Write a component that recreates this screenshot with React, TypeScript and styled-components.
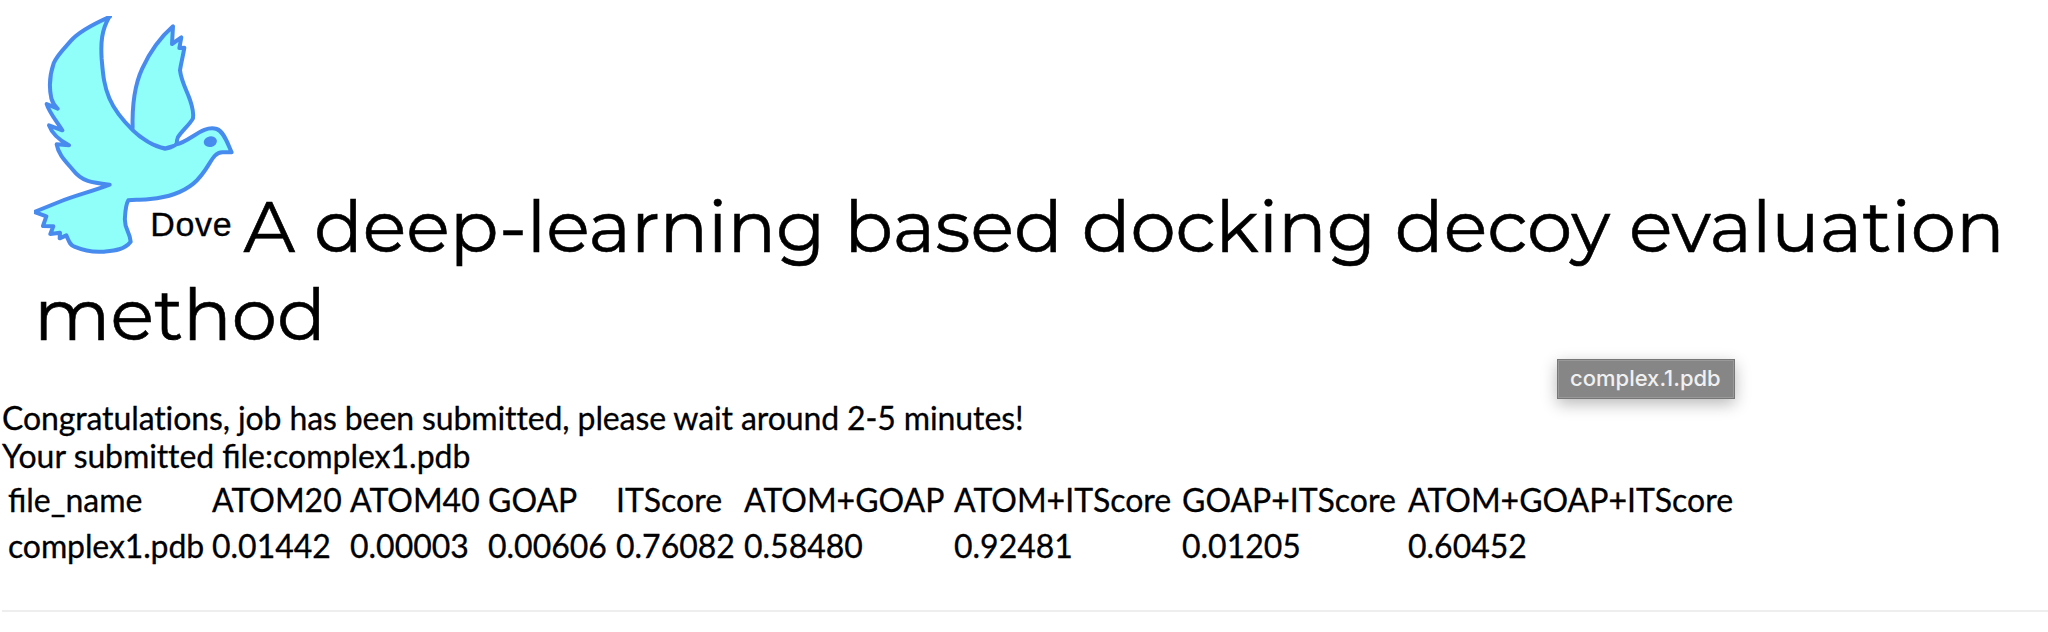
import React from "react";
import styled, { createGlobalStyle } from "styled-components";

const GlobalStyle = createGlobalStyle`
  body {
    margin: 0;
    background: #fff;
    color: #000;
    font: 32px/38.4px Lato, sans-serif;
    -webkit-text-stroke: 0.3px currentColor;
    overflow: hidden;
  }
`;

const Page = styled.main`
  position: relative;
  height: 632px;
  overflow: hidden;
`;

const Title = styled.h1`
  margin: 0;
  padding: 16px 34px 0;
  font: 400 72px/88px Montserrat, Inter, sans-serif;
  -webkit-text-stroke: 0.6px currentColor;
`;

const Logo = styled.svg`
  display: inline-block;
  width: 200px;
  height: 240px;
  margin: 0 9.5px -4px 0;
  overflow: hidden;
  vertical-align: baseline;
`;

const Status = styled.section`
  padding: 41px 0 0 2px;
`;

const Message = styled.p`
  margin: 0;
`;

const Unligated = styled.span<{ $spacing?: number }>`
  font-variant-ligatures: none;
  letter-spacing: ${(p) => p.$spacing ?? 0}px;
`;

const Scores = styled.table`
  width: 1736px;
  margin-top: -1px;
  table-layout: fixed;
  border-collapse: separate;
  border-spacing: 4px;
`;

const Column = styled.col<{ $width: number }>`
  width: ${(p) => p.$width}px;
`;

const Cell = styled.td<{ $spacing?: number }>`
  height: 38px;
  padding: 2px;
  line-height: 38px;
  letter-spacing: ${(p) => p.$spacing ?? 0}px;
  white-space: nowrap;
`;

const Divider = styled.hr`
  height: 2px;
  margin: 39px 0 0 2px;
  border: 0;
  background: #eee;
`;

const DragLabel = styled.div`
  position: absolute;
  left: 1557px;
  top: 359px;
  box-sizing: border-box;
  width: 178px;
  height: 40px;
  padding-left: 12px;
  border: 1px solid #777;
  background: #868686;
  box-shadow: inset 0 0 0 1px #999, 0 5px 16px rgba(0, 0, 0, 0.28);
  color: #f0f0f0;
  font: 500 22px/37px Inter, sans-serif;
  -webkit-text-stroke: 0;
`;

const columns = [
  { name: "file_name", score: "complex1.pdb", width: 200, spacing: -0.12 },
  { name: "ATOM20", score: "0.01442", width: 134 },
  { name: "ATOM40", score: "0.00003", width: 134 },
  { name: "GOAP", score: "0.00606", width: 124 },
  { name: "ITScore", score: "0.76082", width: 124 },
  { name: "ATOM+GOAP", score: "0.58480", width: 206 },
  { name: "ATOM+ITScore", score: "0.92481", width: 224 },
  { name: "GOAP+ITScore", score: "0.01205", width: 222 },
  { name: "ATOM+GOAP+ITScore", score: "0.60452", width: 328 },
];

function DoveLogo() {
  return (
    <Logo viewBox="42 48 600 720">
      <g fill="#90fffa" stroke="#488bef" strokeWidth="12" strokeLinejoin="round">
        <path d="M338 392C336 330 341 260 367 205C389 158 421 112 459 79L456 132L484 112L478 144L493 143C489 169 483 190 480 211C484 245 500 271 509 297C516 318 522 333 519 355C507 377 481 396 472 415L469 436L435 440Z" />
        <path d="M270 50C234 66 180 91 153 122C130 148 110 167 101 190C87 230 88 267 94 295C98 309 104 318 113 326L80 312C87 336 109 363 127 391L87 376C97 403 121 422 147 436L110 433C115 463 136 483 159 510C186 545 214 548 269 554C218 574 163 587 117 606L43 636L79 649L69 678L100 679L91 702L120 698L119 715L139 706C147 724 149 735 163 740C199 755 222 757 249 755C279 752 312 751 332 725C330 694 311 686 315 651C316 632 318 613 325 601C346 597 366 602 391 597C447 592 487 578 520 551C570 510 573 456 608 457L635 457C624 434 613 395 590 387C548 374 510 425 469 433C455 442 444 446 435 446C400 440 360 412 338 390C309 362 282 328 268 295C251 254 249 222 245 177C242 130 244 91 268 50Z" />
        <path
          stroke="none"
          d="M344 388L348 360L470 400L462 431L436 439C405 434 372 414 344 388Z"
        />
      </g>
      <ellipse cx="571" cy="425" rx="20" ry="16" fill="#488bef" transform="rotate(-12 571 425)" />
      <text
        x="391"
        y="709"
        fontFamily="Liberation Sans, sans-serif"
        fontSize="102"
        letterSpacing="2"
        fill="#000"
        stroke="#000"
        strokeWidth="1"
      >
        Dove
      </text>
    </Logo>
  );
}

export default function App() {
  return (
    <Page>
      <GlobalStyle />
      <Title>
        <DoveLogo />
        A deep-learning based docking decoy evaluation method
      </Title>
      <Status>
        <Message>
          <Unligated $spacing={-0.11}>
            Congratulations, job has been submitted, please wait around 2-5 minutes!
          </Unligated>
        </Message>
        <Message>
          Your <Unligated $spacing={-0.1}>submitted</Unligated> file:complex1.pdb
        </Message>
        <Scores>
          <colgroup>
            {columns.map((c) => (
              <Column key={c.name} $width={c.width} />
            ))}
          </colgroup>
          <tbody>
            <tr>
              {columns.map((c) => (
                <Cell key={c.name}>{c.name}</Cell>
              ))}
            </tr>
            <tr>
              {columns.map((c) => (
                <Cell key={c.name} $spacing={c.spacing}>
                  {c.score}
                </Cell>
              ))}
            </tr>
          </tbody>
        </Scores>
      </Status>
      <Divider />
      <DragLabel>complex.1.pdb</DragLabel>
    </Page>
  );
}
